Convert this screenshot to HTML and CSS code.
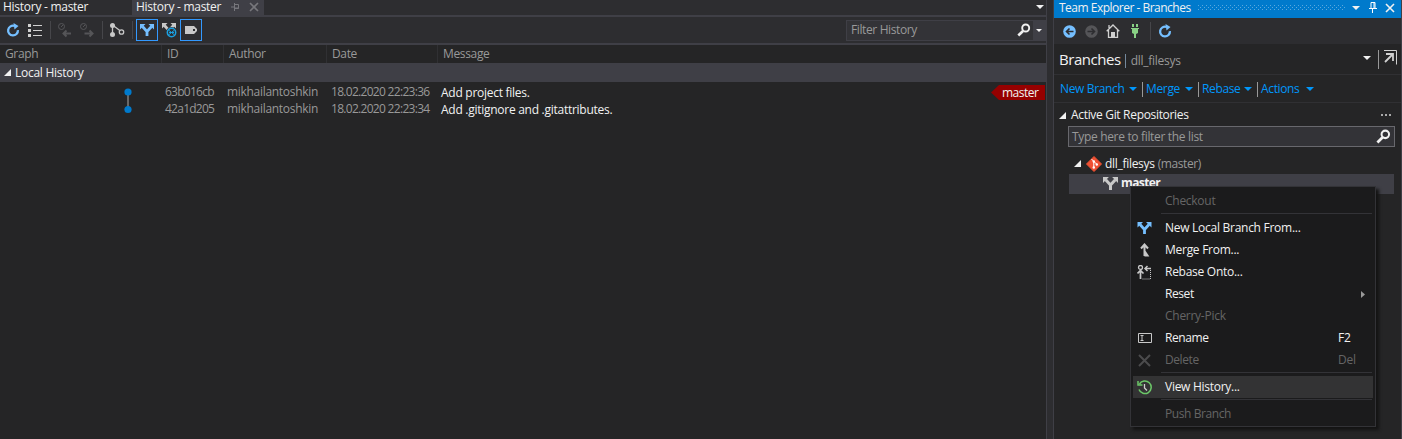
FILE: index.html
```html
<!DOCTYPE html>
<html lang="en">
<head>
<meta charset="utf-8">
<title>History - master</title>
<link rel="stylesheet" href="styles.css">
</head>
<body>
<svg class="defs" width="0" height="0">
  <symbol id="refresh" viewBox="0 0 14 14"><path d="M8.500 2.900A4.900 4.900 0 1 0 11.900 7.200" fill="none" stroke="currentColor" stroke-width="2.300"/><path d="M7.500 0 12.500 3 8.500 6.500z" fill="currentColor"/></symbol>
  <symbol id="branch" viewBox="0 0 14 12"><path d="M2.500 2.500 7 7.500v4.500M11.500 2.500 7 7.500" fill="none" stroke="currentColor" stroke-width="2.800"/><path d="M0 0h5.500L0 5.500zM14 0H8.500L14 5.500z" fill="currentColor"/></symbol>
  <symbol id="search" viewBox="0 0 14 14"><circle cx="8.700" cy="5" r="3.500" fill="none" stroke="currentColor" stroke-width="1.900"/><path d="M6 8 1.300 12.500" stroke="currentColor" stroke-width="2.600"/></symbol>
  <symbol id="caret" viewBox="0 0 8 4"><path d="M0 0h8L4 4z" fill="currentColor"/></symbol>
  <symbol id="expanded" viewBox="0 0 7 7"><path d="M7 0v7H0z" fill="currentColor"/></symbol>
  <symbol id="cross" viewBox="0 0 10 10"><path d="m1 1 8 8M9 1 1 9" stroke="currentColor" stroke-width="1.600"/></symbol>
</svg>
<div class="ide">
  <main class="history">
    <div class="tabs">
      <div class="tab"><span class="t title">History - master</span></div>
      <div class="tab active"><span class="t title">History - master</span>
        <svg class="tabpin" width="9" height="8"><path d="M0 4h3M3.500 0v8M3.500 1.500h4v4h-4M3.500 5h4.500" fill="none" stroke="#77777c"/></svg>
        <svg class="tabclose" width="10" height="10"><use href="#cross"/></svg>
      </div>
      <svg class="tabmenu" width="8" height="4"><use href="#caret"/></svg>
    </div>
    <div class="toolbar">
      <svg class="blue i-refresh" width="14" height="14"><use href="#refresh"/></svg>
      <svg class="i-list" width="15" height="13"><path d="M0 0h3v3H0zM0 5h3v3H0zM0 10h3v3H0zM5 1h9v1H5zM5 6h9v1H5zM5 11h9v1H5z" fill="#d0d0d0"/></svg>
      <i class="sep s1"></i>
      <svg class="i-in" width="15" height="15" fill="none" stroke="#555558"><circle cx="3.500" cy="3.500" r="3"/><path d="m3 4 2-2"/><path d="M13 10.500H6M8.500 7.500l-3 3 3 3" stroke-width="2"/></svg>
      <svg class="i-out" width="15" height="15" fill="none" stroke="#555558"><circle cx="3.500" cy="3.500" r="3"/><path d="m3 4 2-2"/><path d="M4.500 10.500h8M9.500 7.500l3 3-3 3" stroke-width="2"/></svg>
      <i class="sep s2"></i>
      <svg class="i-graph" width="15" height="14"><path d="M2.500 2v9M2.500 2l8 6" stroke="#c8c8c8" stroke-width="1.300"/><circle cx="2.500" cy="2.500" r="2.500" fill="#c8c8c8"/><circle cx="2.500" cy="11.500" r="2.500" fill="#c8c8c8"/><circle cx="11.500" cy="9" r="2.200" fill="#2d2d30" stroke="#c8c8c8" stroke-width="1.300"/></svg>
      <i class="sep s3"></i>
      <span class="toggle"><svg class="blue" width="14" height="12"><use href="#branch"/></svg></span>
      <svg class="i-remote" width="15" height="15"><g color="#c8c8c8"><use href="#branch" width="14" height="12"/></g><circle cx="9.500" cy="9.500" r="5.500" fill="#2d2d30"/><circle cx="9.500" cy="9.500" r="4.200" fill="none" stroke="#1ba1e2" stroke-width="1.500"/><path d="m6.500 7 6 5M6.500 12l6-5M7 9.500h5" stroke="#1ba1e2" stroke-width="1"/></svg>
      <span class="toggle tag"><svg width="12" height="8"><path fill="#c8c8c8" fill-rule="evenodd" d="M0 0h9l3 3v2L9 8H0zM8 3v2h2V3z"/></svg></span>
      <div class="filter"><span class="t filter-text">Filter History</span><svg class="mag" width="14" height="14"><use href="#search"/></svg><span class="drop"><svg width="6" height="3"><use href="#caret"/></svg></span></div>
    </div>
    <div class="grid head"><span class="t">Graph</span><span class="t">ID</span><span class="t">Author</span><span class="t">Date</span><span class="t">Message</span></div>
    <div class="group"><svg width="7" height="7"><use href="#expanded"/></svg><span class="t group-name">Local History</span></div>
    <div class="commits">
      <svg class="graph" width="8" height="26"><path d="M4 4v18" stroke="#686868" stroke-width="2"/><circle cx="4" cy="4" r="3.600" fill="#007acc"/><circle cx="4" cy="21.500" r="3.600" fill="#007acc"/></svg>
      <div class="list">
        <div class="commit"><span class="t id">63b016cb</span><span class="t author">mikhailantoshkin</span><span class="t date">18.02.2020 22:23:36</span><span class="t msg">Add project files.</span><span class="label"><b class="t">master</b></span></div>
        <div class="commit"><span class="t id">42a1d205</span><span class="t author">mikhailantoshkin</span><span class="t date">18.02.2020 22:23:34</span><span class="t msg">Add .gitignore and .gitattributes.</span></div>
      </div>
    </div>
  </main>
  <aside class="explorer">
    <header class="caption"><span class="t">Team Explorer - Branches</span><i class="grip"></i><svg class="c1" width="8" height="4"><use href="#caret"/></svg><svg class="c2" width="8" height="11"><path d="M2 6V.5h4V6M5 .5V6M0 6.500h8M3.500 7v4" fill="none" stroke="#fff"/></svg><svg class="c3" width="10" height="10"><use href="#cross"/></svg></header>
    <div class="nav">
      <svg width="13" height="13"><circle cx="6.500" cy="6.500" r="6.300" fill="#75bfff"/><path d="M10.500 6.500H4M6.500 3.500l-3 3 3 3" fill="none" stroke="#2d2d30" stroke-width="1.600"/></svg>
      <svg class="n2" width="13" height="13"><circle cx="6.500" cy="6.500" r="6.300" fill="#555558"/><path d="M2.500 6.500H9M6.500 3.500l3 3-3 3" fill="none" stroke="#2d2d30" stroke-width="1.600"/></svg>
      <svg class="n3" width="14" height="14"><path d="M.7 7.300 7 1l6.300 6.300M2.500 6v7.500h9V6M3 4V1" fill="none" stroke="#d0d0d0" stroke-width="1.300"/><path d="M5 8h4v5H5z" fill="#d0d0d0"/></svg>
      <svg class="n4" width="8" height="14"><path d="M1 0h2v3H1zM5 0h2v3H5zM0 4h8v1H7v4L5 10v4H3v-4L1 9V5H0z" fill="#89d185"/></svg>
      <i class="sep"></i>
      <svg class="blue n5" width="14" height="14"><use href="#refresh"/></svg>
    </div>
    <div class="page"><span class="t big">Branches</span><i class="bar"></i><span class="t repo">dll_filesys</span><svg class="pagecaret" width="8" height="4"><use href="#caret"/></svg><i class="vline"></i><svg class="popout" width="14" height="15"><path d="M1 .5h12.500v14" fill="none" stroke="#d0d0d0"/><path d="M2 12 9.500 4.500M3 4h7v7" fill="none" stroke="#d0d0d0" stroke-width="1.800"/></svg></div>
    <div class="links">
      <span class="link l1"><span class="t">New Branch</span><svg width="8" height="4"><use href="#caret"/></svg></span>
      <span class="link l2"><span class="t">Merge</span><svg width="8" height="4"><use href="#caret"/></svg></span>
      <span class="link l3"><span class="t">Rebase</span><svg width="8" height="4"><use href="#caret"/></svg></span>
      <span class="link l4"><span class="t">Actions</span><svg width="8" height="4"><use href="#caret"/></svg></span>
    </div>
    <div class="section"><svg width="7" height="7"><use href="#expanded"/></svg><span class="t">Active Git Repositories</span><svg class="dots" width="11" height="2"><path d="M0 0h2v2H0zM4 0h2v2H4zM8 0h2v2H8z" fill="#aaa"/></svg></div>
    <div class="search"><span class="t">Type here to filter the list</span><svg width="15" height="15"><use href="#search"/></svg></div>
    <div class="node"><svg class="exp" width="7" height="7"><use href="#expanded"/></svg><svg class="git" width="16" height="16"><path d="m8 .5 7.500 7.500L8 15.500.5 8z" fill="#f05033" stroke="#f05033" stroke-linejoin="round"/><path d="m5.500 3 2.300 2.500v6M8 5.500l3 3" fill="none" stroke="#fff"/><circle cx="7.800" cy="5.500" r="1.200" fill="#fff"/><circle cx="7.800" cy="11.500" r="1.200" fill="#fff"/><circle cx="10.800" cy="8.500" r="1.200" fill="#fff"/></svg><span class="t name">dll_filesys</span><span class="t dim">(master)</span></div>
    <div class="node selected"><svg width="15" height="13"><use href="#branch"/></svg><span class="t">master</span></div>
  </aside>
  <nav class="menu">
    <div class="item off"><span class="t">Checkout</span></div>
    <hr>
    <div class="item"><span class="ico blue"><svg width="15" height="12"><use href="#branch"/></svg></span><span class="t">New Local Branch From...</span></div>
    <div class="item"><span class="ico"><svg width="10" height="14"><path d="M4.500 13V2M1 5.500l3.500-4L8 5.500M4.500 8l3 4.500h-3" fill="none" stroke="#c8c8c8" stroke-width="2"/></svg></span><span class="t">Merge From...</span></div>
    <div class="item"><span class="ico"><svg width="15" height="15" fill="none" stroke="#c8c8c8"><circle cx="3.500" cy="2.500" r="2" stroke-width="1.300"/><path d="M3.500 14V6M.5 8.500l3-3 3 3" stroke-width="1.700"/><path d="M14 3.500H9M10.500 1 8 3.500 10.500 6" stroke-width="1.500"/><path d="M13.500 5v9H5" stroke-dasharray="1 1"/></svg></span><span class="t">Rebase Onto...</span></div>
    <div class="item"><span class="t tight">Reset</span><svg class="sub" width="4" height="7"><path d="M0 0l4 3.500L0 7z" fill="#999"/></svg></div>
    <div class="item off"><span class="t">Cherry-Pick</span></div>
    <div class="item"><span class="ico"><svg width="14" height="10"><path d="M.5.5h13v9H.5zM2.500 2.500h3M2.500 7.500h3M4 2.500v5" fill="none" stroke="#c8c8c8"/></svg></span><span class="t tight">Rename</span><span class="t key">F2</span></div>
    <div class="item off"><span class="ico"><svg width="13" height="13"><path d="m1 1 11 11M12 1 1 12" stroke="#4b4b4d" stroke-width="2"/></svg></span><span class="t tight">Delete</span><span class="t key">Del</span></div>
    <hr>
    <div class="item hover"><span class="ico"><svg width="16" height="15" fill="none"><path d="M2.500 4A6.300 6.300 0 1 1 2 9.500M1 1v4h4.500" stroke="#6cc768" stroke-width="1.500"/><path d="M7.500 4v4l2.500 2.500" stroke="#d0d0d0" stroke-width="1.300"/></svg></span><span class="t">View History...</span></div>
    <hr>
    <div class="item off"><span class="t tight">Push Branch</span></div>
  </nav>
</div>
</body>
</html>
```
FILE: styles.css
```css
* { box-sizing: border-box; }
body { margin: 0; overflow: hidden; background: #2d2d30; color: #f1f1f1; font: 12px/16px "Open Sans", "Noto Sans", sans-serif; letter-spacing: -.27px; }
svg { display: block; flex: none; }
.defs { position: absolute; }
.t { white-space: nowrap; flex: none; }
.tight { letter-spacing: -.42px; }
.blue { color: #75bfff; }
.ide { position: relative; display: flex; width: 1402px; height: 439px; }
.history { width: 1047px; display: flex; flex-direction: column; border-right: 1px solid #3f3f46; background: #252526; }
.tabs { height: 15px; display: flex; background: #2d2d30; }
.tab { width: 132px; padding-left: 3px; line-height: 13px; display: flex; }
.tab.active { padding-left: 4px; background: #3f3f46; line-height: 14px; }
.tabpin { margin: 3px 0 0 10px; }
.tabclose { margin: 2px 0 0 9px; color: #77777c; }
.tabmenu { margin: 5px 2px 0 auto; }
.toolbar { height: 30px; border-top: 2px solid #3f3f46; border-bottom: 2px solid #3f3f46; background: #2d2d30; display: flex; align-items: center; padding-left: 6px; }
.i-list { margin-left: 8px; }
.sep { width: 1px; height: 18px; background: #46464a; flex: none; }
.s1 { margin-left: 7px; }
.i-in { margin-left: 7px; }
.i-out { margin-left: 7px; }
.s2 { margin-left: 7px; }
.i-graph { margin-left: 7px; }
.s3 { margin: 0 3px 0 7px; }
.toggle { width: 22px; height: 22px; border: 1px solid #3399ff; display: flex; align-items: center; justify-content: center; flex: none; }
.i-remote { margin: 0 4px 0 4px; }
.toggle.tag { margin-left: -1px; }
.filter { margin-left: auto; width: 200px; height: 21px; border: 1px solid #3f3f46; background: #333337; color: #999; display: flex; align-items: center; padding-left: 4px; }
.filter-text { letter-spacing: -.38px; }
.mag { margin-left: auto; margin-right: 2px; color: #f1f1f1; }
.drop { width: 12px; height: 19px; background: #3f3f46; color: #f1f1f1; display: flex; align-items: center; justify-content: center; }
.grid { display: grid; grid-template-columns: 162px 62px 103px 111px 1fr; height: 18px; color: #999; line-height: 18px; }
.grid .t { border-right: 1px solid #303033; padding-left: 5px; letter-spacing: -.35px; }
.grid .t:last-child { border: 0; }
.group { height: 19px; background: #3f3f46; display: flex; align-items: center; padding-left: 4px; gap: 4px; }
.commits { display: flex; padding-top: 2px; }
.graph { margin: 4px 33px 0 124px; }
.list { flex: 1; }
.commit { height: 17px; line-height: 16px; color: #999; display: grid; grid-template-columns: 62px 104px 110px 1fr auto; }
.id { letter-spacing: -.75px; }
.author { letter-spacing: -.3px; }
.date { letter-spacing: -.7px; }
.msg { line-height: 18px; color: #f1f1f1; }
.label { width: 54px; height: 15px; margin: 1px 1px 0 0; background: #960000; clip-path: polygon(8px 0, 100% 0, 100% 100%, 8px 100%, 0 50%); padding-left: 11px; line-height: 15px; color: #f1f1f1; }
.label .t { font-weight: 400; letter-spacing: -.5px; }
.explorer { width: 349px; margin-left: 6px; border-left: 1px solid #3f3f46; border-right: 1px solid #3f3f46; background: #252526; }
.caption { height: 18px; background: #007acc; display: flex; align-items: center; padding: 0 6px 3px 5px; }
.caption .t { letter-spacing: -.5px; }
.grip { width: 148px; height: 5px; margin-left: 7px; background: linear-gradient(90deg, #59a8de 1px, transparent 1px) 0 0 / 4px 1px repeat-x, linear-gradient(90deg, #59a8de 1px, transparent 1px) 2px 2px / 4px 1px repeat-x, linear-gradient(90deg, #59a8de 1px, transparent 1px) 0 4px / 4px 1px repeat-x; }
.c1 { margin-left: auto; }
.c2 { margin-left: 9px; }
.c3 { margin-left: 8px; }
.nav { height: 26px; background: #2d2d30; display: flex; align-items: center; padding-left: 9px; }
.n2 { margin-left: 9px; }
.n3 { margin-left: 8px; }
.n4 { margin-left: 11px; }
.nav .sep { margin-left: 11px; }
.n5 { margin-left: 7px; }
.page { height: 31px; border-bottom: 1px solid #303033; display: flex; align-items: center; padding-left: 5px; }
.big { font-size: 15px; letter-spacing: -.45px; }
.bar { width: 1px; height: 14px; margin: 3px 5px 0 4px; background: #75899c; }
.repo { color: #999; padding-top: 3px; }
.pagecaret { margin: 0 7px 3px auto; }
.vline { width: 1px; height: 19px; background: #999; }
.popout { margin: 0 4px 4px 4px; }
.links { height: 28px; border-bottom: 1px solid #303033; display: flex; align-items: center; color: #0097fb; padding: 1px 0 0 6px; }
.link { height: 15px; display: flex; align-items: center; justify-content: space-between; padding-right: 5px; margin-right: 3px; border-right: 1px solid #999; }
.link .t { letter-spacing: -.35px; }
.l1 { width: 83px; }
.l2 { width: 53px; }
.l3 { width: 56px; }
.l4 { width: 58px; border: 0; }
.section { height: 22px; display: flex; align-items: center; padding: 2px 0 0 5px; gap: 5px; }
.section .t { letter-spacing: -.32px; }
.dots { margin: 0 9px 0 auto; }
.search { width: 327px; height: 21px; margin: 1px 0 0 14px; border: 1px solid #68686d; background: #333337; color: #999; display: flex; align-items: center; padding: 0 3px 0 3px; }
.search .t { letter-spacing: -.33px; }
.search svg { margin-left: auto; color: #f1f1f1; }
.node { height: 27px; padding: 6px 0 0 20px; display: flex; align-items: center; }
.git { margin: 0 3px 0 5px; }
.name { letter-spacing: -.3px; }
.dim { color: #999; margin-left: 3px; letter-spacing: -.4px; }
.node.selected { width: 325px; height: 20px; margin-left: 15px; padding: 0 0 2px 34px; background: #3f3f46; gap: 3px; font-weight: 700; letter-spacing: -.6px; }
.selected svg { color: #c8c8c8; }
.menu { position: absolute; left: 1130px; top: 186px; width: 246px; height: 241px; padding: 3px 2px; border: 1px solid #333337; background: #1b1b1c; box-shadow: 3px 3px 3px #141414; }
.item { height: 22px; padding-left: 32px; display: flex; align-items: center; position: relative; }
.item.off { color: #656565; }
.item.hover { background: #333334; }
.ico { position: absolute; left: 0; width: 23px; height: 22px; display: flex; align-items: center; justify-content: center; }
.sub { margin: 0 8px 0 auto; }
.key { position: absolute; left: 205px; }
hr { height: 1px; margin: 1px 1px 3px 28px; border: 0; background: #333337; }
```
